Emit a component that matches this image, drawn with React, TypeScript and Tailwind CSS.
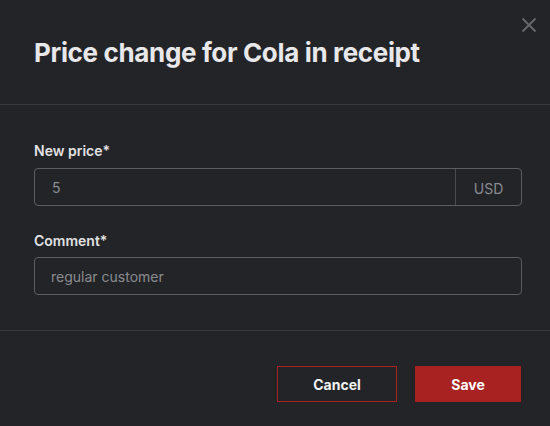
import React from "react";

export default function App() {
  return (
    <div
      className="relative flex h-[426px] w-[550px] flex-col overflow-hidden bg-[#232428]"
      style={{ fontFamily: "Inter, 'Noto Sans', sans-serif" }}
    >
      <button
        type="button"
        aria-label="Close"
        className="absolute right-[12px] top-[16px] flex h-[18px] w-[18px] items-center justify-center text-[#66676b]"
      >
        <svg width="16" height="16" viewBox="0 0 16 16" fill="none">
          <path d="M1.5 1.5L14.5 14.5M14.5 1.5L1.5 14.5" stroke="currentColor" strokeWidth="2" />
        </svg>
      </button>

      <div className="h-[105px] border-b border-[#3a3b3f] pl-[34px] pt-[35px]">
        <h2 className="text-[26px] font-bold leading-[36px] tracking-[-0.35px] text-[#e8e8ea]">
          Price change for Cola in receipt
        </h2>
      </div>

      <div className="flex flex-col pl-[34px] pr-[28px] pt-[37px]">
        <label className="text-[14px] font-semibold leading-[18px] text-[#e2e2e4]">New price*</label>
        <div className="mt-[8px] flex h-[38px] rounded-[4px] border border-[#5c5d62]">
          <div className="flex flex-1 items-center pl-[17px] text-[14px] text-[#8a8b90]">5</div>
          <div className="flex w-[66px] items-center justify-center border-l border-[#4a4b50] pt-[2px] text-[14px] text-[#8a8b90]">
            USD
          </div>
        </div>

        <label className="mt-[26px] text-[14px] font-semibold leading-[18px] text-[#e2e2e4]">Comment*</label>
        <div className="mt-[7px] flex h-[38px] items-center rounded-[4px] border border-[#5c5d62] pl-[16px] text-[14px] text-[#8a8b90]">
          regular customer
        </div>
      </div>

      <div className="mt-[35px] flex justify-end gap-[18px] border-t border-[#3a3b3f] pr-[29px] pt-[35px]">
        <button
          type="button"
          className="h-[36px] w-[120px] border border-[#a82222] text-[14px] font-bold text-[#f2f2f2]"
        >
          Cancel
        </button>
        <button
          type="button"
          className="h-[36px] w-[106px] bg-[#a82222] text-[14px] font-bold text-white"
        >
          Save
        </button>
      </div>
    </div>
  );
}
